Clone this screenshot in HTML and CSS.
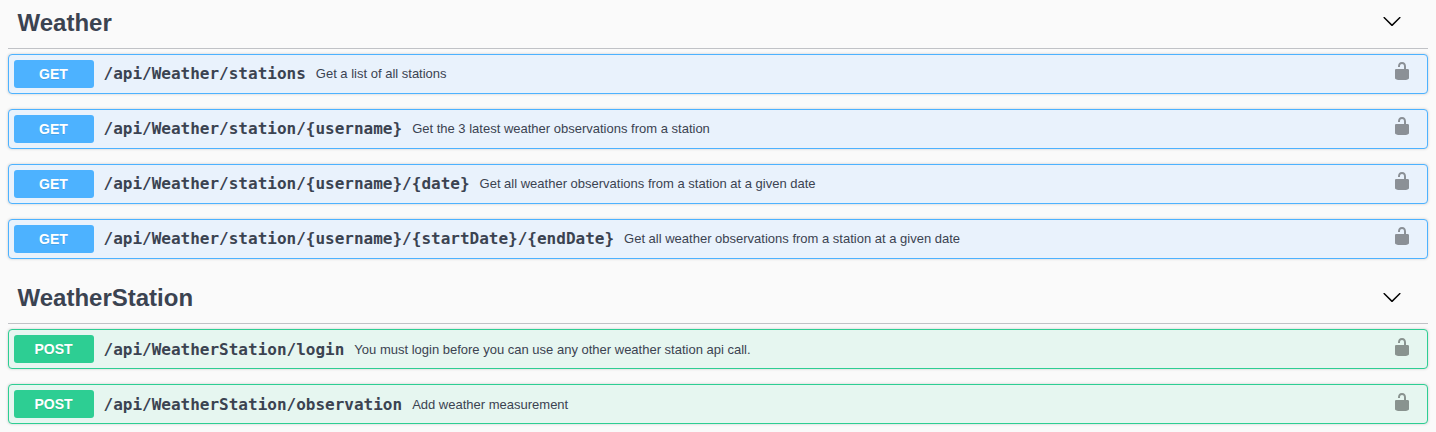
FILE: index.html
```html
<!DOCTYPE html>
<html lang="en">
<head>
<meta charset="utf-8">
<title>Weather API</title>
<link rel="stylesheet" href="styles.css">
</head>
<body>
<svg class="defs" width="0" height="0">
<symbol id="lock" viewBox="0 0 20 20"><path d="M15.8 8H14V5.600C14 2.703 12.665 1 10 1 7.334 1 6 2.703 6 5.600V6h2v-.801C8 3.754 8.797 3 10 3c1.203 0 2 .754 2 2.199V8H4c-.553 0-1 .646-1 1.199V17c0 .549.428 1.139.951 1.307l1.197.387C5.672 18.861 6.550 19 7.100 19h5.800c.549 0 1.428-.139 1.951-.307l1.196-.387c.524-.167.953-.757.953-1.306V9.199C17 8.646 16.352 8 15.800 8z"/></symbol>
<symbol id="arrow" viewBox="0 0 20 20"><path d="M17.418 6.109c.272-.268.709-.268.979 0s.271.701 0 .969l-7.908 7.830c-.270.268-.707.268-.979 0l-7.908-7.830c-.270-.268-.270-.701 0-.969s.709-.268.979 0L10 13.250z"/></symbol>
</svg>
<main class="api">
<section class="tag">
<h3 class="tag-title"><span>Weather</span><svg class="arrow"><use href="#arrow"/></svg></h3>
<div class="op get"><span class="method">GET</span><span class="path">/api/Weather/stations</span><span class="desc">Get a list of all stations</span><svg class="lock"><use href="#lock"/></svg></div>
<div class="op get"><span class="method">GET</span><span class="path">/api/Weather/station/{username}</span><span class="desc">Get the 3 latest weather observations from a station</span><svg class="lock"><use href="#lock"/></svg></div>
<div class="op get"><span class="method">GET</span><span class="path">/api/Weather/station/{username}/{date}</span><span class="desc">Get all weather observations from a station at a given date</span><svg class="lock"><use href="#lock"/></svg></div>
<div class="op get"><span class="method">GET</span><span class="path">/api/Weather/station/{username}/{startDate}/{endDate}</span><span class="desc">Get all weather observations from a station at a given date</span><svg class="lock"><use href="#lock"/></svg></div>
</section>
<section class="tag">
<h3 class="tag-title"><span>WeatherStation</span><svg class="arrow"><use href="#arrow"/></svg></h3>
<div class="op post"><span class="method">POST</span><span class="path">/api/WeatherStation/login</span><span class="desc">You must login before you can use any other weather station api call.</span><svg class="lock"><use href="#lock"/></svg></div>
<div class="op post"><span class="method">POST</span><span class="path">/api/WeatherStation/observation</span><span class="desc">Add weather measurement</span><svg class="lock"><use href="#lock"/></svg></div>
</section>
</main>
</body>
</html>
```

FILE: styles.css
```css
* { box-sizing: border-box; }
body { margin: 0; background: #fafafa; color: #3b4351; font-family: "Liberation Sans", Arial, sans-serif; overflow: hidden; }
.defs { display: block; }
.api { padding: 0 8px; }
.tag { display: flow-root; }
.tag-title { display: flex; align-items: center; justify-content: space-between; height: 49px; margin: 0 0 5px; padding: 0 26px 2px 9.500px; border-bottom: 1px solid rgba(59,67,81,.3); font-size: 24px; line-height: 28px; }
.tag + .tag .tag-title { height: 50px; }
.arrow { width: 20px; height: 20px; margin-bottom: 4px; }
.tag + .tag .arrow { margin-bottom: 2px; }
.op { display: flex; align-items: center; height: 40px; margin-bottom: 15px; padding: 5px; border: 1px solid; border-radius: 4px; box-shadow: 0 0 3px rgba(0,0,0,.19); }
.get { border-color: #4db2ff; background: #e9f2fc; }
.post { border-color: #2dce93; background: #e6f6f0; }
.method { width: 80px; height: 28px; padding-right: 1px; border-radius: 3px; color: #fff; font-size: 14px; font-weight: 700; line-height: 28px; text-align: center; text-shadow: 0 1px 0 rgba(0,0,0,.1); }
.get .method { background: #4db2ff; }
.post .method { background: #2dce93; }
.path { padding: 0 10px 0 9.500px; font: 600 16px "DejaVu Sans Mono", monospace; }
.desc { flex: 1; font-size: 13px; }
.get .path, .get .desc { padding-bottom: 2px; }
.lock { width: 20px; height: 20px; margin: 0 10px 5px; opacity: .4; fill: #000; }
.get .lock { margin-bottom: 7px; }
```
